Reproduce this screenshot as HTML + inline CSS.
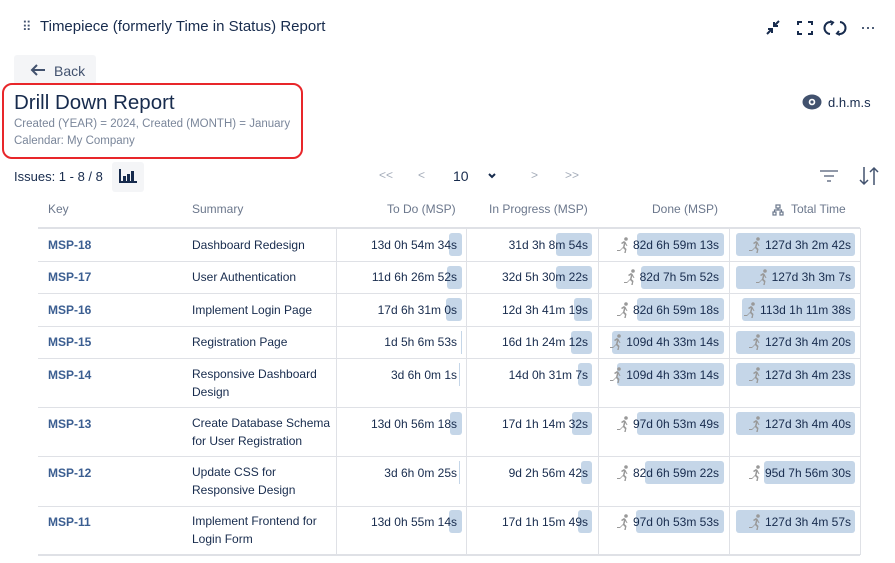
<!DOCTYPE html>
<html><head><meta charset="utf-8"><style>
*{margin:0;padding:0;box-sizing:border-box}
body{width:895px;height:563px;background:#fff;font-family:"Liberation Sans",sans-serif;color:#172b4d;position:relative;overflow:hidden}
.a{position:absolute;white-space:nowrap}
.hd{font-size:12px;color:#6b778c;top:202px}
.k{font-size:12px;font-weight:bold;color:#3b5e91;left:48px}
.s{font-size:12px;left:192px;line-height:17.5px;white-space:normal;width:140px}
.hl{position:absolute;left:38px;width:822px;height:1px;background:#dfe1e6}
.vl{position:absolute;width:1px;background:#dfe1e6;top:228px;height:327px}
.b{position:absolute;background:#c5d6e8;border-radius:3px;height:23px}
.t{position:absolute;font-size:12px;white-space:nowrap;display:flex;align-items:center;justify-content:flex-end;height:16px;margin-top:-1px}
.r{display:block;margin-right:1px}
</style></head><body>
<div class="a" style="left:22px;top:19px;font-size:13px;color:#42526e;letter-spacing:-1px">⠿</div>
<div class="a" style="left:40px;top:18px;font-size:15px;color:#172b4d">Timepiece (formerly Time in Status) Report</div>
<svg class="a" style="left:764px;top:18px" width="110" height="20" viewBox="0 0 110 20" fill="none" stroke="#172b4d" stroke-width="2">
<path d="M3 16l5-5M4 11h4v4M15 3l-5 5M10 4v4h4"/>
<path d="M34 7V4h4M44 4h4v3M48 13v3h-4M38 16h-4v-3"/>
<path d="M67 4a6 6 0 0 0-1 12M66 3l3 1.5-2 2.5M75 16a6 6 0 0 0 1-12M76 17l-3-1.5 2-2.5"/>
<circle cx="99" cy="10" r="1" fill="#172b4d" stroke="none"/><circle cx="104" cy="10" r="1" fill="#172b4d" stroke="none"/><circle cx="109" cy="10" r="1" fill="#172b4d" stroke="none"/>
</svg>
<div class="a" style="left:14px;top:55px;width:82px;height:30px;background:#f4f5f7;border-radius:3px"></div>
<svg class="a" style="left:30px;top:63px" width="16" height="14" viewBox="0 0 16 14" fill="none" stroke="#42526e" stroke-width="2"><path d="M15 7H2M7 2L2 7l5 5"/></svg>
<div class="a" style="left:54px;top:63px;font-size:14px;color:#42526e">Back</div>
<div class="a" style="left:2px;top:83px;width:301px;height:76px;border:2px solid #e8262a;border-radius:10px"></div>
<div class="a" style="left:14px;top:91px;font-size:20.5px;color:#172b4d">Drill Down Report</div>
<div class="a" style="left:14px;top:118px;font-size:11.5px;color:#7a869a">Created (YEAR) = 2024, Created (MONTH) = January</div>
<div class="a" style="left:14px;top:135px;font-size:11.5px;color:#7a869a">Calendar: My Company</div>
<svg class="a" style="left:802px;top:94px" width="20" height="16" viewBox="0 0 20 16"><ellipse cx="10" cy="8" rx="9.5" ry="7.5" fill="#42526e"/><circle cx="10" cy="8" r="3.3" fill="#fff"/><circle cx="10" cy="8" r="1.6" fill="#42526e"/></svg>
<div class="a" style="left:828px;top:95px;font-size:13px;color:#172b4d">d.h.m.s</div>
<div class="a" style="left:14px;top:169px;font-size:13px;color:#172b4d">Issues: 1 - 8 / 8</div>
<div class="a" style="left:112px;top:162px;width:32px;height:30px;background:#f4f5f7;border-radius:3px"></div>
<svg class="a" style="left:118px;top:168px" width="20" height="16" viewBox="0 0 20 16" fill="#172b4d"><rect x="1" y="1" width="2" height="14"/><rect x="1" y="13" width="18" height="2"/><rect x="5" y="8" width="3" height="5"/><rect x="9" y="6" width="3" height="7"/><rect x="13" y="3" width="3" height="10"/></svg>
<div class="a" style="left:379px;top:168px;font-size:12px;color:#a5adba">&lt;&lt;</div>
<div class="a" style="left:418px;top:168px;font-size:12px;color:#a5adba">&lt;</div>
<div class="a" style="left:453px;top:168px;font-size:14px;color:#172b4d">10</div>
<svg class="a" style="left:487px;top:172px" width="10" height="8" viewBox="0 0 10 8"><path d="M2 2l3 3 3-3" stroke="#172b4d" stroke-width="2" fill="none"/></svg>
<div class="a" style="left:531px;top:168px;font-size:12px;color:#a5adba">&gt;</div>
<div class="a" style="left:565px;top:168px;font-size:12px;color:#a5adba">&gt;&gt;</div>
<svg class="a" style="left:819px;top:168px" width="20" height="16" viewBox="0 0 20 16" stroke="#6b778c" stroke-width="1.5"><path d="M1 3h18M5 8h10M8 13h4"/></svg>
<svg class="a" style="left:858px;top:166px" width="22" height="20" viewBox="0 0 22 20" stroke="#42526e" stroke-width="1.5" fill="none"><path d="M6 1v17M2 14l4 4 4-4M16 19V2M12 6l4-4 4 4"/></svg>

<div class="a hd" style="left:48px">Key</div>
<div class="a hd" style="left:192px">Summary</div>
<div class="a hd" style="left:387px">To Do (MSP)</div>
<div class="a hd" style="left:489px">In Progress (MSP)</div>
<div class="a hd" style="left:652px">Done (MSP)</div>
<svg class="a" style="left:772px;top:204px" width="12" height="12" viewBox="0 0 12 12" fill="none" stroke="#6b778c" stroke-width="1.2"><rect x="4" y="1" width="4" height="3"/><rect x="1" y="8" width="3" height="3"/><rect x="8" y="8" width="3" height="3"/><path d="M6 4v2M2.5 8V6h7v2"/></svg>
<div class="a hd" style="left:791px">Total Time</div>

<div class="hl" style="top:227px;height:2px;background:#dfe1e6"></div>
<div class="hl" style="top:261px"></div><div class="hl" style="top:293px"></div><div class="hl" style="top:326px"></div><div class="hl" style="top:358px"></div><div class="hl" style="top:407px"></div><div class="hl" style="top:456px"></div><div class="hl" style="top:506px"></div>
<div class="hl" style="top:554px;height:2px"></div>
<div class="vl" style="left:336px"></div><div class="vl" style="left:466px"></div><div class="vl" style="left:598px"></div><div class="vl" style="left:729px"></div><div class="vl" style="left:860px"></div>

<svg width="0" height="0" style="position:absolute"><defs><g id="run" fill="#999"><circle cx="10" cy="2" r="1.8"/><path d="M8 4l-3 2 1 1 2-1-1 4-3 3H1v1h3l3-3 2 2-1 4h1.5l1-5-2-2 1-3 1 2h3V9h-2l-2-4z"/></g></defs></svg>

<!-- Row 1 -->
<div class="a k" style="top:238px">MSP-18</div><div class="a s" style="top:237px">Dashboard Redesign</div>
<div class="b" style="left:449px;width:13px;top:233px"></div><div class="t" style="right:438px;top:238px">13d 0h 54m 34s</div>
<div class="b" style="left:556px;width:36px;top:233px"></div><div class="t" style="right:307px;top:238px">31d 3h 8m 54s</div>
<div class="b" style="left:637px;width:87px;top:233px"></div><div class="t" style="right:176px;top:238px"><svg class="r" width="16" height="16" viewBox="0 0 16 16"><use href="#run"/></svg>82d 6h 59m 13s</div>
<div class="b" style="left:736px;width:119px;top:233px"></div><div class="t" style="right:44px;top:238px"><svg class="r" width="16" height="16" viewBox="0 0 16 16"><use href="#run"/></svg>127d 3h 2m 42s</div>
<!-- Row 2 -->
<div class="a k" style="top:270px">MSP-17</div><div class="a s" style="top:269px">User Authentication</div>
<div class="b" style="left:447px;width:15px;top:266px"></div><div class="t" style="right:438px;top:270px">11d 6h 26m 52s</div>
<div class="b" style="left:556px;width:36px;top:266px"></div><div class="t" style="right:307px;top:270px">32d 5h 30m 22s</div>
<div class="b" style="left:641px;width:83px;top:266px"></div><div class="t" style="right:176px;top:270px"><svg class="r" width="16" height="16" viewBox="0 0 16 16"><use href="#run"/></svg>82d 7h 5m 52s</div>
<div class="b" style="left:736px;width:119px;top:266px"></div><div class="t" style="right:44px;top:270px"><svg class="r" width="16" height="16" viewBox="0 0 16 16"><use href="#run"/></svg>127d 3h 3m 7s</div>
<!-- Row 3 -->
<div class="a k" style="top:303px">MSP-16</div><div class="a s" style="top:302px">Implement Login Page</div>
<div class="b" style="left:446px;width:16px;top:298px"></div><div class="t" style="right:438px;top:303px">17d 6h 31m 0s</div>
<div class="b" style="left:574px;width:18px;top:298px"></div><div class="t" style="right:307px;top:303px">12d 3h 41m 19s</div>
<div class="b" style="left:637px;width:87px;top:298px"></div><div class="t" style="right:176px;top:303px"><svg class="r" width="16" height="16" viewBox="0 0 16 16"><use href="#run"/></svg>82d 6h 59m 18s</div>
<div class="b" style="left:742px;width:113px;top:298px"></div><div class="t" style="right:44px;top:303px"><svg class="r" width="16" height="16" viewBox="0 0 16 16"><use href="#run"/></svg>113d 1h 11m 38s</div>
<!-- Row 4 -->
<div class="a k" style="top:335px">MSP-15</div><div class="a s" style="top:334px">Registration Page</div>
<div class="b" style="left:461px;width:1px;top:331px;border-radius:0"></div><div class="t" style="right:438px;top:335px">1d 5h 6m 53s</div>
<div class="b" style="left:571px;width:21px;top:331px"></div><div class="t" style="right:307px;top:335px">16d 1h 24m 12s</div>
<div class="b" style="left:612px;width:112px;top:331px"></div><div class="t" style="right:176px;top:335px"><svg class="r" width="16" height="16" viewBox="0 0 16 16"><use href="#run"/></svg>109d 4h 33m 14s</div>
<div class="b" style="left:736px;width:119px;top:331px"></div><div class="t" style="right:44px;top:335px"><svg class="r" width="16" height="16" viewBox="0 0 16 16"><use href="#run"/></svg>127d 3h 4m 20s</div>
<!-- Row 5 -->
<div class="a k" style="top:368px">MSP-14</div><div class="a s" style="top:366px">Responsive Dashboard Design</div>
<div class="b" style="left:459px;width:1px;top:363px;border-radius:0"></div><div class="t" style="right:438px;top:368px">3d 6h 0m 1s</div>
<div class="b" style="left:578px;width:14px;top:363px"></div><div class="t" style="right:307px;top:368px">14d 0h 31m 7s</div>
<div class="b" style="left:617px;width:107px;top:363px"></div><div class="t" style="right:176px;top:368px"><svg class="r" width="16" height="16" viewBox="0 0 16 16"><use href="#run"/></svg>109d 4h 33m 14s</div>
<div class="b" style="left:736px;width:119px;top:363px"></div><div class="t" style="right:44px;top:368px"><svg class="r" width="16" height="16" viewBox="0 0 16 16"><use href="#run"/></svg>127d 3h 4m 23s</div>
<!-- Row 6 -->
<div class="a k" style="top:417px">MSP-13</div><div class="a s" style="top:415px">Create Database Schema for User Registration</div>
<div class="b" style="left:450px;width:12px;top:412px"></div><div class="t" style="right:438px;top:417px">13d 0h 56m 18s</div>
<div class="b" style="left:572px;width:20px;top:412px"></div><div class="t" style="right:307px;top:417px">17d 1h 14m 32s</div>
<div class="b" style="left:637px;width:87px;top:412px"></div><div class="t" style="right:176px;top:417px"><svg class="r" width="16" height="16" viewBox="0 0 16 16"><use href="#run"/></svg>97d 0h 53m 49s</div>
<div class="b" style="left:736px;width:119px;top:412px"></div><div class="t" style="right:44px;top:417px"><svg class="r" width="16" height="16" viewBox="0 0 16 16"><use href="#run"/></svg>127d 3h 4m 40s</div>
<!-- Row 7 -->
<div class="a k" style="top:466px">MSP-12</div><div class="a s" style="top:464px">Update CSS for Responsive Design</div>
<div class="b" style="left:459px;width:1px;top:461px;border-radius:0"></div><div class="t" style="right:438px;top:466px">3d 6h 0m 25s</div>
<div class="b" style="left:581px;width:11px;top:461px"></div><div class="t" style="right:307px;top:466px">9d 2h 56m 42s</div>
<div class="b" style="left:645px;width:79px;top:461px"></div><div class="t" style="right:176px;top:466px"><svg class="r" width="16" height="16" viewBox="0 0 16 16"><use href="#run"/></svg>82d 6h 59m 22s</div>
<div class="b" style="left:764px;width:91px;top:461px"></div><div class="t" style="right:44px;top:466px"><svg class="r" width="16" height="16" viewBox="0 0 16 16"><use href="#run"/></svg>95d 7h 56m 30s</div>
<!-- Row 8 -->
<div class="a k" style="top:515px">MSP-11</div><div class="a s" style="top:513px">Implement Frontend for Login Form</div>
<div class="b" style="left:449px;width:13px;top:510px"></div><div class="t" style="right:438px;top:515px">13d 0h 55m 14s</div>
<div class="b" style="left:578px;width:14px;top:510px"></div><div class="t" style="right:307px;top:515px">17d 1h 15m 49s</div>
<div class="b" style="left:636px;width:88px;top:510px"></div><div class="t" style="right:176px;top:515px"><svg class="r" width="16" height="16" viewBox="0 0 16 16"><use href="#run"/></svg>97d 0h 53m 53s</div>
<div class="b" style="left:736px;width:119px;top:510px"></div><div class="t" style="right:44px;top:515px"><svg class="r" width="16" height="16" viewBox="0 0 16 16"><use href="#run"/></svg>127d 3h 4m 57s</div>
</body></html>
